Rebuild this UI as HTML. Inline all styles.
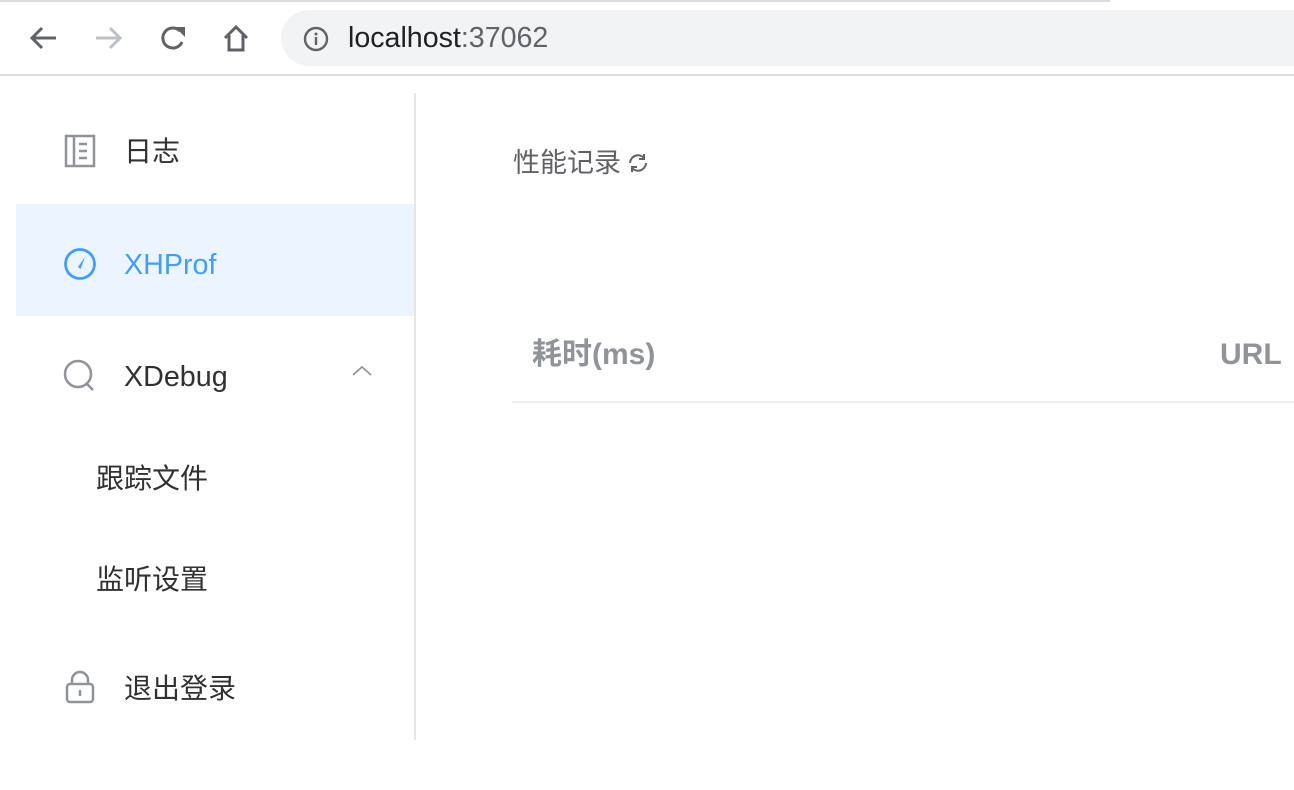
<!DOCTYPE html>
<html><head><meta charset="utf-8"><style>
*{margin:0;padding:0;box-sizing:border-box}
body{width:1294px;height:790px;overflow:hidden;background:#fff;font-family:"Liberation Sans","Noto Sans CJK SC",sans-serif;position:relative}
.a{position:absolute}
.t{font-size:28px;color:#303133;white-space:nowrap;line-height:1}
</style></head><body>
<div class="a" style="left:0;top:0;width:1110px;height:2px;background:#dadce0"></div>
<div class="a" style="left:0;top:74px;width:1294px;height:2px;background:#dadce0"></div>
<div class="a" style="left:281px;top:10px;width:1100px;height:56px;border-radius:28px;background:#f1f3f4"></div>
<svg class="a" style="left:26px;top:22px" width="36" height="32" viewBox="0 0 36 32"><path d="M30 16H6M16 6L6 16l10 10" fill="none" stroke="#5f6368" stroke-width="3"/></svg>
<svg class="a" style="left:90px;top:22px" width="36" height="32" viewBox="0 0 36 32"><path d="M6 16h24M20 6l10 10-10 10" fill="none" stroke="#bdc1c6" stroke-width="3"/></svg>
<svg class="a" style="left:156px;top:22px" width="34" height="32" viewBox="0 0 34 32"><path d="M26 20A10 10 0 1 1 24 9" fill="none" stroke="#5f6368" stroke-width="3"/><path d="M19 5h10v10z" fill="#5f6368"/></svg>
<svg class="a" style="left:220px;top:22px" width="32" height="32" viewBox="0 0 32 32"><path d="M5 16L16 5l11 11M9 13v15h14V13" fill="none" stroke="#5f6368" stroke-width="3"/></svg>
<svg class="a" style="left:302px;top:25px" width="28" height="28" viewBox="0 0 28 28"><circle cx="14" cy="14" r="11" fill="none" stroke="#5f6368" stroke-width="2.4"/><rect x="12.8" y="12" width="2.4" height="8" fill="#5f6368"/><circle cx="14" cy="9" r="1.5" fill="#5f6368"/></svg>
<div class="a" style="left:348px;top:23px;font-size:28.6px;color:#202124;line-height:30px">localhost<span style="color:#5f6368">:37062</span></div>

<div class="a" style="left:414px;top:93px;width:2px;height:647px;background:#e6e6e6"></div>
<div class="a" style="left:16px;top:204px;width:398px;height:112px;background:#ecf5ff"></div>

<svg class="a" style="left:64px;top:134px" width="32" height="34" viewBox="0 0 32 34"><rect x="2" y="2" width="28" height="30" fill="none" stroke="#909399" stroke-width="2.5"/><path d="M10 2v30M15 10h8M15 17h8M15 24h8" stroke="#909399" stroke-width="2.5"/></svg>
<div class="a t" style="left:124px;top:138px">日志</div>

<svg class="a" style="left:63px;top:247px" width="34" height="34" viewBox="0 0 34 34"><circle cx="17" cy="17" r="14.5" fill="none" stroke="#409eff" stroke-width="2.8"/><path d="M22 10L15 20l2.5 2z" fill="#409eff"/></svg>
<div class="a t" style="left:124px;top:251px;color:#409eff;font-size:28.7px">XHProf</div>

<svg class="a" style="left:63px;top:359px" width="34" height="34" viewBox="0 0 34 34"><circle cx="15" cy="15" r="13" fill="none" stroke="#909399" stroke-width="2.5"/><path d="M24 25l6 6" stroke="#909399" stroke-width="2.5"/></svg>
<div class="a t" style="left:124px;top:363px;font-size:28.7px">XDebug</div>
<svg class="a" style="left:350px;top:364px" width="24" height="14" viewBox="0 0 24 14"><path d="M3 11l9-8 9 8" fill="none" stroke="#909399" stroke-width="1.6"/></svg>

<div class="a t" style="left:96px;top:465px">跟踪文件</div>
<div class="a t" style="left:96px;top:566px">监听设置</div>

<svg class="a" style="left:64px;top:670px" width="32" height="34" viewBox="0 0 32 34"><rect x="3" y="14" width="26" height="18" rx="3" fill="none" stroke="#909399" stroke-width="2.5"/><path d="M8 14V10a8 8 0 0 1 16 0v4M16 20v6" fill="none" stroke="#909399" stroke-width="2.5"/></svg>
<div class="a t" style="left:124px;top:675px">退出登录</div>

<div class="a" style="left:513px;top:150px;font-size:27px;color:#606266;line-height:1">性能记录</div>
<svg class="a" style="left:626px;top:151px" width="24" height="24" viewBox="0 0 24 24"><path d="M4 12a8 8 0 0 1 14-5M20 12a8 8 0 0 1-14 5" fill="none" stroke="#606266" stroke-width="2"/><path d="M18 3v5h-5M6 21v-5h5" fill="none" stroke="#606266" stroke-width="2"/></svg>

<div class="a" style="left:532px;top:340px;font-size:30px;font-weight:bold;color:#909399;line-height:1">耗时(ms)</div>
<div class="a" style="left:1220px;top:340px;font-size:30px;font-weight:bold;color:#909399;line-height:1">URL</div>
<div class="a" style="left:512px;top:401px;width:782px;height:2px;background:#ebeef5"></div>
</body></html>
